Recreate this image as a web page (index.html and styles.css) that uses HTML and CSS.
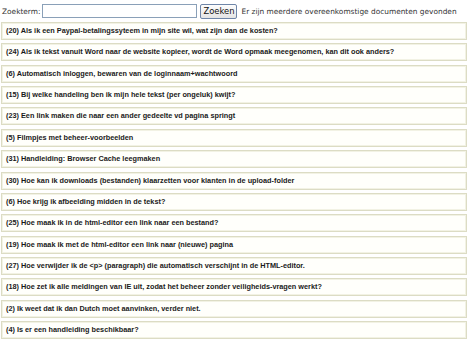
FILE: index.html
```html
<!DOCTYPE html>
<html lang="nl">
<head>
  <meta charset="UTF-8">
  <title>Zoeken in de handleiding</title>
  <link rel="stylesheet" href="styles.css">
</head>
<body>

  <form class="search">
    <label for="term">Zoekterm:</label>
    <input type="text" id="term">
    <button type="submit">Zoeken</button>
    <span class="found">Er zijn meerdere overeenkomstige documenten gevonden</span>
  </form>

  <div class="results">
    <div class="result">(20) Als ik een Paypal-betalingssyteem in mijn site wil, wat zijn dan de kosten?</div>
    <div class="result">(24) Als ik tekst vanuit Word naar de website kopieer, wordt de Word opmaak meegenomen, kan dit ook anders?</div>
    <div class="result">(6) Automatisch inloggen, bewaren van de loginnaam+wachtwoord</div>
    <div class="result">(15) Bij welke handeling ben ik mijn hele tekst (per ongeluk) kwijt?</div>
    <div class="result">(23) Een link maken die naar een ander gedeelte vd pagina springt</div>
    <div class="result">(5) Filmpjes met beheer-voorbeelden</div>
    <div class="result">(31) Handleiding: Browser Cache leegmaken</div>
    <div class="result">(30) Hoe kan ik downloads (bestanden) klaarzetten voor klanten in de upload-folder</div>
    <div class="result">(6) Hoe krijg ik afbeelding midden in de tekst?</div>
    <div class="result">(25) Hoe maak ik in de html-editor een link naar een bestand?</div>
    <div class="result">(19) Hoe maak ik met de html-editor een link naar (nieuwe) pagina</div>
    <div class="result">(27) Hoe verwijder ik de &lt;p&gt; (paragraph) die automatisch verschijnt in de HTML-editor.</div>
    <div class="result">(18) Hoe zet ik alle meldingen van IE uit, zodat het beheer zonder veiligheids-vragen werkt?</div>
    <div class="result">(2) Ik weet dat ik dan Dutch moet aanvinken, verder niet.</div>
    <div class="result">(4) Is er een handleiding beschikbaar?</div>
  </div>

</body>
</html>
```

FILE: styles.css
```css
body {
  margin: 0;
  padding: 0 3px 0 1px;
  background: #fff;
  color: #222;
  font-family: 'DejaVu Sans', Verdana, sans-serif;
}
.search {
  display: flex;
  align-items: center;
  height: 22px;
  padding-left: 1px;
  font-size: 7.4px;
  color: #333;
}
.search label {
  margin-right: 2px;
}
.search input {
  width: 149px;
  height: 12px;
  padding: 0 2px;
  border: 1px solid #8aa0b8;
  background: #fff;
  outline: none;
}
.search button {
  margin: 0 4px 0 3px;
  width: 37px;
  height: 15px;
  padding: 0;
  font-family: 'DejaVu Sans', Verdana, sans-serif;
  font-size: 8.4px;
  color: #111;
  background: linear-gradient(#fdfdfd, #e4e4e4);
  border: 1px solid #6f86a8;
  border-radius: 2px;
}
.results {
  display: flex;
  flex-direction: column;
  gap: 3.36px;
}
.result {
  height: 14px;
  line-height: 14px;
  padding: 1px 4px;
  background: #fffffb;
  border: 1px solid #dcdcc4;
  box-shadow: inset 0 0 0 1px #f2f2e4;
  font-family: 'Liberation Sans', Arial, sans-serif;
  font-weight: bold;
  font-size: 7.3px;
  color: #1a1a1a;
  white-space: nowrap;
  overflow: hidden;
}
```
